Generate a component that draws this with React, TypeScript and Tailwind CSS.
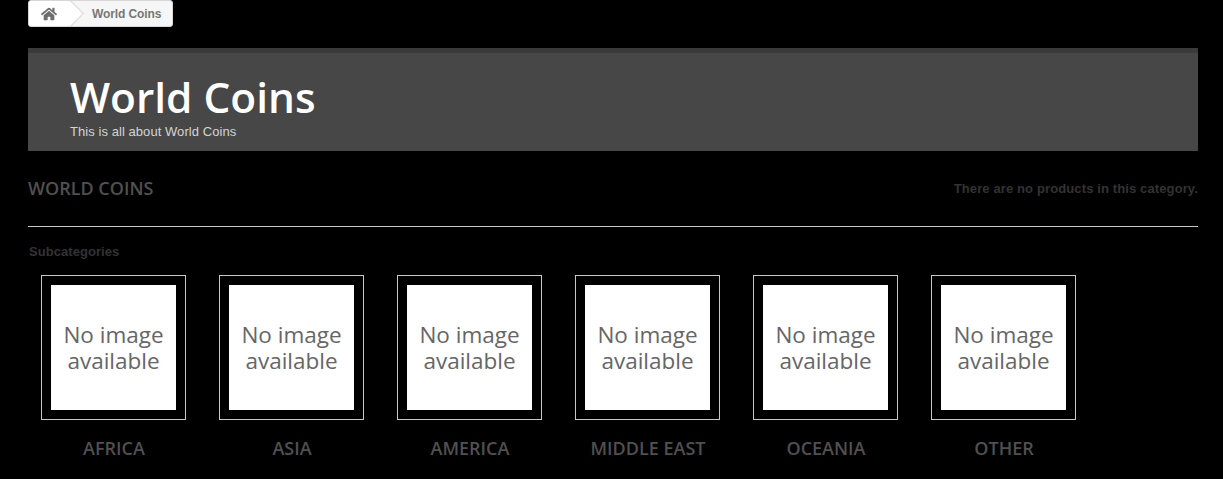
import { FaHome } from "react-icons/fa";

const subcategories = ["AFRICA", "ASIA", "AMERICA", "MIDDLE EAST", "OCEANIA", "OTHER"];

function Breadcrumb() {
  return (
    <div className="flex h-[27px] w-[145px] items-center overflow-hidden rounded-[3px] border border-[#d6d6d6] bg-[#f6f6f6] text-[12px] font-bold tracking-[-0.1px] text-[#777777]">
      <div className="relative flex h-full w-[42px] items-center justify-center bg-white">
        <FaHome className="ml-[-3px] text-[16px] text-[#6e6e6e]" />
        <span className="absolute right-[-9px] top-[3px] h-[19px] w-[19px] rotate-45 border-r border-t border-[#d9d9d9] bg-white" />
      </div>
      <span className="ml-[21px] whitespace-nowrap">World Coins</span>
    </div>
  );
}

function Subcategory({ name }: { name: string }) {
  return (
    <div className="flex w-[145px] flex-col items-center">
      <div className="border border-[#c8c8c8] p-[9px]">
        <div className="flex h-[125px] w-[125px] items-center justify-center bg-white font-['Open_Sans',sans-serif] text-[22.5px] leading-[26px] text-[#666666]">
          <p className="w-[110px] text-center">No image available</p>
        </div>
      </div>
      <a className="mt-[16px] ml-px whitespace-nowrap font-['Open_Sans',sans-serif] text-[18px] font-semibold leading-[24px] text-[#505050]">
        {name}
      </a>
    </div>
  );
}

export default function App() {
  return (
    <div className="h-[479px] overflow-hidden bg-black pl-[28px] pr-[25px] font-['Liberation_Sans',sans-serif]">
      <Breadcrumb />

      <div className="mt-[21px] h-[103px] border-t-[5px] border-[#3a3a3a] bg-[#474747] pl-[42px] pt-[19px]">
        <h1 className="font-['Open_Sans',sans-serif] text-[42.4px] font-semibold leading-[50px] text-white">World Coins</h1>
        <p className="mt-[2px] text-[13px] leading-[16px] tracking-[0.06px] text-[#d4d4d4]">This is all about World Coins</p>
      </div>

      <div className="flex h-[76px] items-start justify-between border-b border-[#c8c8c8] pt-[25px]">
        <h2 className="font-['Open_Sans',sans-serif] text-[18px] font-semibold leading-[24px] text-[#505050]">WORLD COINS</h2>
        <p className="mt-px text-[13px] font-bold leading-[24px] tracking-[0.12px] text-[#333333]">There are no products in this category.</p>
      </div>

      <p className="ml-px mt-[17px] text-[13px] font-bold leading-[16px] tracking-[0.06px] text-[#333333]">Subcategories</p>

      <div className="ml-[13px] mt-[15px] flex gap-[33px]">
        {subcategories.map((name) => (
          <Subcategory key={name} name={name} />
        ))}
      </div>
    </div>
  );
}
